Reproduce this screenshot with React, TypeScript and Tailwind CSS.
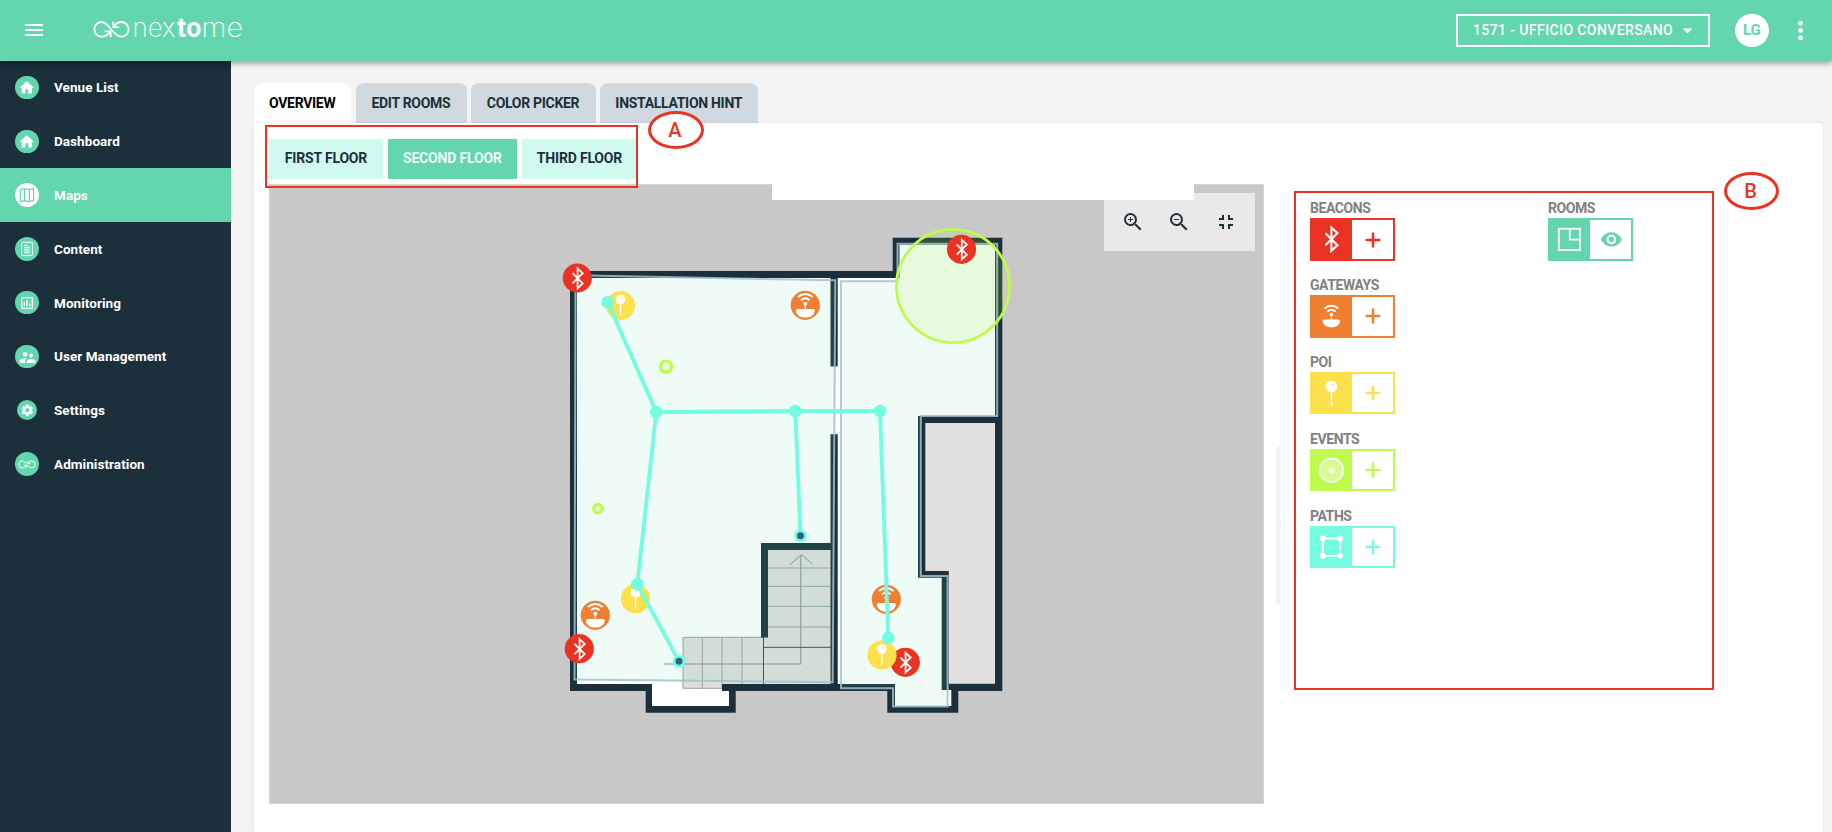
import type { ReactNode } from "react";
import {
  MdArrowDropDown,
  MdFullscreenExit,
  MdHome,
  MdMenu,
  MdMoreVert,
  MdOutlineAssessment,
  MdSettings,
  MdSupervisorAccount,
  MdVisibility,
  MdZoomIn,
  MdZoomOut,
} from "react-icons/md";

/* ---------- glyphs, all drawn around the origin ---------- */

function BluetoothGlyph() {
  return <path d="M-6 -6L6 6L0 11.6V-11.6L6 -6L-6 6" fill="none" stroke="#fff" strokeWidth="2.1" />;
}

function GatewayGlyph() {
  return (
    <g stroke="#fff" fill="none">
      <path d="M-6.8 -7.6Q0 -13.4 6.8 -7.6" strokeWidth="1.8" />
      <path d="M-4 -4.6Q0 -8.4 4 -4.6" strokeWidth="1.7" />
      <circle cx="0" cy="-1.5" r="1.8" fill="#fff" stroke="none" />
      <path d="M0 -1V4" strokeWidth="1.3" />
      <path d="M-8.8 5.2Q-8.8 3.4 -7 3.4H7Q8.8 3.4 8.8 5.2C8.2 9 4.5 11.4 0 11.4S-8.2 9 -8.8 5.2Z" fill="#fff" stroke="none" />
    </g>
  );
}

function PinGlyph() {
  return (
    <g>
      <circle cx="0" cy="-6.6" r="5.8" fill="#fff" />
      <circle cx="1.2" cy="-8.4" r="1.1" fill="#fce04c" />
      <path d="M0 -2V12.4" stroke="#fff" strokeWidth="1.7" />
    </g>
  );
}

function EventGlyph() {
  return (
    <g>
      <circle r="11.7" fill="#fff" fillOpacity="0.4" stroke="#fff" strokeWidth="1.8" />
      <circle r="2.7" fill="#fff" />
    </g>
  );
}

function PathGlyph() {
  return (
    <g fill="#fff" stroke="#fff">
      <rect x="-8.7" y="-8.7" width="17.4" height="17.4" fill="none" strokeWidth="1.7" />
      <circle cx="-8.7" cy="-8.7" r="3" stroke="none" />
      <circle cx="8.7" cy="-8.7" r="3" stroke="none" />
      <circle cx="-8.7" cy="8.7" r="3" stroke="none" />
      <circle cx="8.7" cy="8.7" r="3" stroke="none" />
    </g>
  );
}

function RoomGlyph() {
  return (
    <g fill="none" stroke="#fff" strokeWidth="1.8">
      <rect x="-10.6" y="-10.4" width="21.2" height="21.2" />
      <path d="M0.4 -10.4V0.4H10.6" />
    </g>
  );
}

function InfinityMark({ className, width }: { className: string; width: number }) {
  return (
    <svg viewBox="93 20 37 19" className={className} fill="none" stroke="#fff" strokeWidth={width}>
      <path d="M110 32C107.5 35.6 104.5 36.7 101.7 36.7A7.3 7.3 0 1 1 101.7 22C108.5 22 113.5 36.7 121.3 36.7A7.3 7.3 0 0 0 121.3 22C118.5 22 116 23.6 114 26.6" />
      <path d="M104.6 31.4H110.7V37M113.3 21.6V27.2H119" />
    </svg>
  );
}

/* ---------- sidebar ---------- */

type NavItem = { label: string; icon: ReactNode; active?: boolean; small?: boolean };

const navItems: NavItem[] = [
  { label: "Venue List", icon: <MdHome size={17.5} /> },
  { label: "Dashboard", icon: <MdHome size={17.5} /> },
  {
    label: "Maps",
    active: true,
    icon: (
      <svg viewBox="-8 -8 16 16" className="size-4" fill="none" stroke="#63d6ad" strokeWidth="1.2">
        <path d="M-6.6 -5.4L-2.4 -6.4L2.4 -5.4L6.6 -6.4V5.6L2.4 6.6L-2.4 5.6L-6.6 6.6ZM-2.4 -6.4V5.6M2.4 -5.4V6.6" />
      </svg>
    ),
  },
  {
    label: "Content",
    icon: (
      <svg viewBox="-8 -8 16 16" className="size-4" fill="none" stroke="#fff" strokeWidth="0.9">
        <rect x="-5.4" y="-6.6" width="10.8" height="13.2" rx="0.8" />
        <path d="M-3 -3.6H1M-3 -1.6H3M-3 0.2H3M-3 2H3M-3 3.8H3" />
      </svg>
    ),
  },
  { label: "Monitoring", icon: <MdOutlineAssessment size={16} /> },
  { label: "User Management", icon: <MdSupervisorAccount size={19} className="mt-[2px]" /> },
  { label: "Settings", icon: <MdSettings size={14.5} />, small: true },
  { label: "Administration", icon: <InfinityMark className="h-[9px] w-[18px]" width={2.1} /> },
];

function Sidebar() {
  return (
    <nav className="flex w-[231px] shrink-0 flex-col bg-[#1b303b]">
      {navItems.map((item) => (
        <a
          key={item.label}
          className={`flex h-[53.8px] shrink-0 items-center pl-[15px] ${item.active ? "bg-[#63d6ad]" : ""}`}
        >
          <span className="flex w-6 justify-center">
            <span
              className={`flex items-center justify-center rounded-full ${item.small ? "size-5" : "size-[23.5px]"} ${
                item.active ? "bg-white" : "bg-[#63d6ad] text-white"
              }`}
            >
              {item.icon}
            </span>
          </span>
          <span className="ml-[15px] text-[13.5px] font-bold tracking-[0.06px] text-white">{item.label}</span>
        </a>
      ))}
    </nav>
  );
}

/* ---------- header ---------- */

function Header() {
  return (
    <header className="relative z-10 flex h-[60.6px] shrink-0 items-center bg-[#63d6ad] text-white shadow-[0_2px_6px_rgba(0,0,0,0.4)]">
      <MdMenu size={24} className="ml-[22px] shrink-0" />
      <div className="ml-[47px] flex items-center">
        <InfinityMark className="mt-[-2px] h-[19px] w-[37px]" width={1.8} />
        <svg viewBox="0 0 114 44" className="mt-[-2px] ml-[2px] h-[44px] w-[114px] fill-white font-['Inter'] text-[26px]">
          <text x="0.5" y="29.8" textLength="43" lengthAdjust="spacingAndGlyphs" className="font-extralight">nex</text>
          <text x="45" y="29.8" textLength="24.5" lengthAdjust="spacingAndGlyphs" className="font-bold">to</text>
          <text x="69.5" y="29.8" textLength="41.5" lengthAdjust="spacingAndGlyphs" className="font-extralight">me</text>
        </svg>
      </div>
      <div className="ml-auto flex h-[33.5px] w-[254px] items-center border-2 border-white pl-[15px]">
        <span className="text-[14px] font-medium tracking-[0.4px] whitespace-nowrap">1571 - UFFICIO CONVERSANO</span>
        <MdArrowDropDown size={23} className="ml-[3px] shrink-0" />
      </div>
      <div className="ml-[25px] flex size-[33.5px] items-center justify-center rounded-full bg-white text-[15px] font-bold tracking-[-0.3px] text-[#63d6ad]">
        LG
      </div>
      <MdMoreVert size={29} className="mr-[17.5px] ml-[17px] shrink-0" />
    </header>
  );
}

/* ---------- floor map ---------- */

const nodes: Record<string, [number, number]> = {
  a: [607.7, 302.3],
  b: [656.3, 412],
  c: [795.3, 411],
  d: [880, 411],
  e: [800.5, 535.7],
  f: [637.3, 584.3],
  g: [679, 661.3],
  h: [888.3, 638],
};
const edges = ["ab", "bc", "cd", "ce", "bf", "fg", "dh"];
const exits = ["e", "g"];

const gateways: [number, number][] = [[805.3, 305.3], [595.3, 615.3], [886.3, 599.3]];
const beacons: [number, number][] = [[577.3, 278], [579.3, 648.7], [905.3, 662.3], [961.5, 249.3]];
const pois: [number, number][] = [[620.5, 305.5], [635.5, 598.7], [882, 655]];

function FloorPlan() {
  return (
    <svg viewBox="269 184 995 620" className="h-[620px] w-[995px]">
      {/* outer shell and interior */}
      <path
        d="M570 271H892.7V237.7H1002.3V691H958.3V712.7H887.3V691H735.7V712.7H645.7V691H570Z"
        fill="#1b303b"
      />
      <path
        d="M577 278H899.5V244.7H995V683.5H948.7V690H951.3V706H895V684H722V691H729V706H652V684H577Z"
        fill="#fff"
      />
      <path d="M925 423H995V683.5H949V571H925Z" fill="#e1e0df" />

      {/* stairs */}
      <path d="M763.5 550H832V684H763.5V688.3H683V637.3H763.5Z" fill="#e0dedd" />
      <g fill="none" stroke="#92a3a0" strokeWidth="1">
        <path d="M768 568H831M768 586.3H831M768 606.3H831M768 627H831" />
        <path d="M763.5 637.3H683V688.3H722M702.3 637.3V688.3M742 637.3V684M722 637.3V688.3" />
        <path d="M664 664H800.8V555M790 564.5L801.5 554.5L812.7 564.5" stroke="#7f918e" />
      </g>
      <path d="M763.5 637V684M763.5 647.3H831" stroke="#33494d" strokeWidth="1" fill="none" />

      {/* inner walls */}
      <g fill="#1b303b">
        <path d="M722 684H895V691H722Z" />
        <path d="M830.5 278H837.7V366.6H830.5ZM830.5 434.3H837.7V691H830.5Z" />
        <path d="M761 543H832V550H768V637.5H761Z" />
        <path d="M918 416H1002V423H925.3V571H948.8V690H941.7V577.7H918Z" />
      </g>

      {/* rooms */}
      <g fill="#62d7ae" fillOpacity="0.11" stroke="#a3c0cb" strokeOpacity="0.85" strokeWidth="2">
        <path d="M575.5 275.3L835.3 280.3L832.7 682.3L574.5 679.5Z" />
        <path d="M841 281.2H897.5V243.8H997.2V416H920.8V576H947.6V706.6H893V688.3H841Z" />
      </g>

      {/* events */}
      <g stroke="#bffb4d" fill="#bffb4d" fillOpacity="0.14">
        <circle cx="953" cy="286" r="56.6" strokeWidth="2.8" />
        <circle cx="666" cy="366.6" r="5.6" strokeWidth="3.2" />
        <circle cx="598" cy="508.7" r="4.2" strokeWidth="3.4" />
      </g>

      {/* beacons */}
      {beacons.map(([x, y]) => (
        <g key={`${x}`} transform={`translate(${x} ${y})`}>
          <circle r="14.6" fill="#ea3323" />
          <g transform="translate(0.3 0.3) scale(0.85)">
            <BluetoothGlyph />
          </g>
        </g>
      ))}

      {/* points of interest and gateways */}
      {pois.map(([x, y]) => (
        <g key={`${x}`} transform={`translate(${x} ${y})`}>
          <circle r="14.6" fill="#fce04c" />
          <g transform="translate(0 -0.4) scale(0.83)">
            <PinGlyph />
          </g>
        </g>
      ))}
      {gateways.map(([x, y]) => (
        <g key={`${x}`} transform={`translate(${x} ${y})`}>
          <circle r="14.6" fill="#ef7f31" />
          <g transform="scale(1.08)">
            <GatewayGlyph />
          </g>
        </g>
      ))}

      {/* paths */}
      <g stroke="#72fce0" strokeWidth="3.8">
        {edges.map((e) => (
          <line key={e} x1={nodes[e[0]][0]} y1={nodes[e[0]][1]} x2={nodes[e[1]][0]} y2={nodes[e[1]][1]} />
        ))}
      </g>
      {Object.entries(nodes).map(([id, [x, y]]) => (
        <g key={id}>
          <circle cx={x} cy={y} r="6.3" fill="#72fce0" />
          {exits.includes(id) && <circle cx={x} cy={y} r="3.5" fill="#2b6583" />}
        </g>
      ))}
    </svg>
  );
}

function MapView() {
  return (
    <div className="relative h-[620px] w-[995px] shrink-0 bg-[#c8c8c8] shadow-[inset_0_0_0_1px_#d4d4d4]">
      <FloorPlan />
      <div className="absolute top-[9px] right-[9px] flex h-[58px] w-[151px] items-center bg-[#e9e9e9] text-[#1b303b]">
        <MdZoomIn size={24} className="ml-[17px]" />
        <MdZoomOut size={24} className="ml-[22px]" />
        <MdFullscreenExit size={24} className="ml-[23px]" />
      </div>
      <div className="absolute top-0 left-[503px] h-4 w-[422px] bg-white" />
    </div>
  );
}

/* ---------- legend ---------- */

type ToolProps = { label: string; box: string; text: string; glyph: ReactNode; view?: boolean };

function Tool({ label, box, text, glyph, view }: ToolProps) {
  return (
    <div className="flex h-[76.85px] flex-col">
      <span className="h-[17px] text-[14px] leading-[15px] font-bold tracking-[-0.42px] text-[#808080]">{label}</span>
      <div className={`flex h-[42.3px] w-[84.8px] py-[2px] pr-[2px] ${box}`}>
        <svg viewBox="-21.4 -19 42.4 38" className="h-[38.3px] w-[42.4px]">
          {glyph}
        </svg>
        <div className={`flex h-full flex-1 items-center justify-center bg-white ${text}`}>
          {view ? (
            <MdVisibility size={22.8} className="ml-px" />
          ) : (
            <svg viewBox="-8 -8 16 16" className="size-4" stroke="currentColor" strokeWidth="2.5">
              <path d="M-7.4 0H7.4M0 -7.4V7.4" />
            </svg>
          )}
        </div>
      </div>
    </div>
  );
}

function Legend() {
  return (
    <div className="flex pt-[17.5px]">
      <div className="flex w-[238px] flex-col">
        <Tool label="BEACONS" box="bg-[#ea3323]" text="text-[#ea3323]" glyph={<BluetoothGlyph />} />
        <Tool label="GATEWAYS" box="bg-[#ef7f31]" text="text-[#ef7f31]" glyph={<GatewayGlyph />} />
        <Tool label="POI" box="bg-[#fce04c]" text="text-[#fce04c]" glyph={<PinGlyph />} />
        <Tool label="EVENTS" box="bg-[#bffb4d]" text="text-[#bffb4d]" glyph={<EventGlyph />} />
        <Tool label="PATHS" box="bg-[#74fce0]" text="text-[#74fce0]" glyph={<PathGlyph />} />
      </div>
      <Tool label="ROOMS" box="bg-[#63d6ad]" text="text-[#63d6ad]" glyph={<RoomGlyph />} view />
    </div>
  );
}

/* ---------- callouts ---------- */

function Callout({ letter, className }: { letter: string; className: string }) {
  return (
    <div
      className={`absolute z-20 flex items-center justify-center rounded-[50%] border-[3px] border-[#ea3323] bg-white pr-[2px] text-[20px] font-medium text-[#ea3323] ${className}`}
    >
      {letter}
    </div>
  );
}

/* ---------- page ---------- */

const tabs = [
  { label: "OVERVIEW", className: "w-[97.4px] bg-white text-black" },
  { label: "EDIT ROOMS", className: "w-[110.8px] bg-[#cfd9df] text-[#1b303b]" },
  { label: "COLOR PICKER", className: "w-[124.3px] bg-[#cfd9df] text-[#1b303b]" },
  { label: "INSTALLATION HINT", className: "w-[158px] bg-[#cfd9df] text-[#1b303b]" },
];

const floors = [
  { label: "FIRST FLOOR", className: "w-[114px] bg-[#d0faef] text-[#1b303b]" },
  { label: "SECOND FLOOR", className: "w-[129.7px] bg-[#63d6ad] text-[#effdf8]" },
  { label: "THIRD FLOOR", className: "w-[115.5px] bg-[#d0faef] text-[#1b303b]" },
];

export default function App() {
  return (
    <div className="relative flex h-[832px] w-[1832px] flex-col overflow-hidden bg-[#f4f4f4] font-['Roboto',sans-serif]">
      <Header />
      <div className="flex min-h-0 flex-1">
        <Sidebar />
        <main className="flex flex-1 flex-col pt-[22.4px] pr-[9px] pl-[22.5px]">
          <div className="flex h-[40.3px] shrink-0 gap-[4.6px] pl-[0.5px]">
            {tabs.map((t) => (
              <button
                key={t.label}
                className={`flex items-center justify-center rounded-t-[8px] pr-px text-[14px] font-bold tracking-[-0.3px] whitespace-nowrap ${t.className}`}
              >
                {t.label}
              </button>
            ))}
          </div>
          <section className="flex flex-1 flex-col rounded-tr-[4px] bg-white pt-[15.4px] pl-[15.5px] shadow-[0_0_3px_rgba(0,0,0,0.1)]">
            <div className="flex h-[40.3px] shrink-0 gap-[4.5px]">
              {floors.map((f) => (
                <button
                  key={f.label}
                  className={`flex items-center justify-center pb-[0.5px] text-[14px] font-bold tracking-[-0.18px] whitespace-nowrap ${f.className}`}
                >
                  {f.label}
                </button>
              ))}
            </div>
            <div className="mt-[5px] flex">
              <MapView />
              <div className="flex w-[46px] shrink-0 pt-[263px] pl-3">
                <div className="h-[157px] w-1 bg-[#f1f3f3]" />
                <svg viewBox="0 0 3 12" className="mt-[72px] h-3 w-[3px] fill-[#f1f3f3]">
                  <path d="M0 0L3 6L0 12Z" />
                </svg>
              </div>
              <Legend />
            </div>
          </section>
        </main>
      </div>

      <div className="absolute top-[125px] left-[265px] z-20 h-[63px] w-[373px] border-2 border-[#ea3323]" />
      <div className="absolute top-[191px] left-[1294px] z-20 h-[499px] w-[420px] border-2 border-[#ea3323]" />
      <Callout letter="A" className="top-[111px] left-[648px] h-[38px] w-14" />
      <Callout letter="B" className="top-[172px] left-[1724px] h-[38px] w-[55px]" />
    </div>
  );
}
